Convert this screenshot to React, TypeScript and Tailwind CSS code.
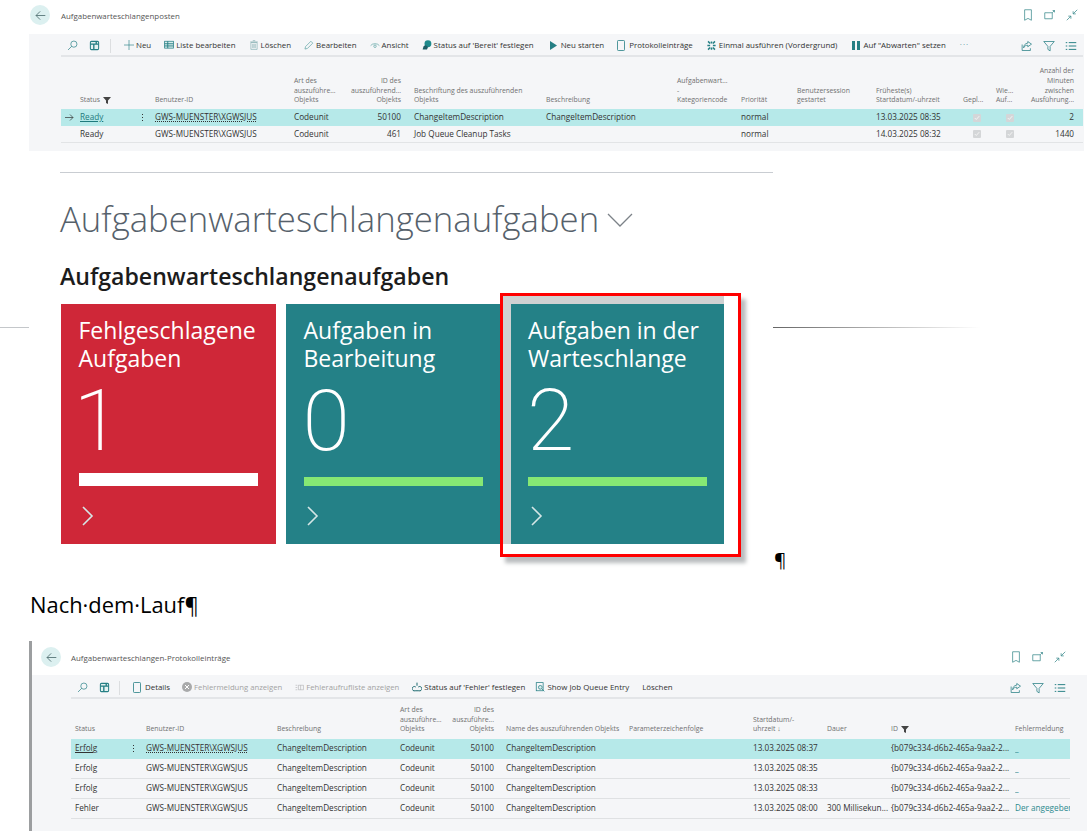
import React from "react";
const T = "#257f84";
const Ic = ({ children, w = 10, c = T, sw = 1 }: { children: React.ReactNode; w?: number; c?: string; sw?: number }) => (
  <svg width={w} height={w} viewBox="0 0 16 16" fill="none" stroke={c} strokeWidth={sw} className="shrink-0">{children}</svg>
);
const Search = () => <Ic w={11}><circle cx="10" cy="6" r="4.500" /><path d="M6.800 9.200 1.500 14.500" /></Ic>;
const Panel = () => <Ic w={11} sw={1.500}><rect x="2" y="2" width="12" height="12" rx="1.500" fill="#e4f2f1" /><path d="M2 6h12M7 6v8M10.500 2v4" strokeWidth="2" /></Ic>;
const Plus = () => <Ic><path d="M8 0v16M0 8h16" /></Ic>;
const Sq = () => <svg width="8" height="11" viewBox="0 0 8 11" fill="none" stroke={T} strokeWidth=".8" className="shrink-0 mr-[2px]"><rect x=".5" y=".5" width="7" height="10" rx=".8" /></svg>;
const Share = () => <Ic w={12}><path d="M9 2l5 3.500L9 9V7C6 7 4.500 8 3.500 10.500 3.500 7 5.500 4.500 9 4.200zM1.500 6v8h11v-3" /></Ic>;
const Filter = () => <Ic w={12}><path d="M1 2h14L9.500 8.500V14.500L6.500 12.500V8.500z" /></Ic>;
const Lines = () => <Ic w={12} sw={1.300}><path d="M1 3.500h2M5 3.500h10M1 8h2M5 8h10M1 12.500h2M5 12.500h10" /></Ic>;
const Book = () => <Ic w={12} c="#3a8a8c"><path d="M3.500 1h9v14L8 12.500 3.500 15z" /></Ic>;
const Pop = () => <Ic w={12} c="#3a8a8c"><path d="M1 5h10v8H1zM11 5l3-3M11.500 2H14v2.500" /></Ic>;
const Shrink = () => <Ic w={12} c="#3a8a8c"><path d="M15 1 9.500 6.500M9.500 3v3.500H13M1 15l5.500-5.500M6.500 13V9.500H3" /></Ic>;
const Back = () => (
  <div className="w-[20px] h-[20px] rounded-full bg-[#dcf0f0] flex items-center justify-center shrink-0">
    <svg width="11" height="11" viewBox="0 0 16 16" fill="none" stroke="#4a6a6c" strokeWidth="1.200"><path d="M15 8H1.500M7.500 2 1.500 8l6 6" /></svg>
  </div>
);
const Item = ({ icon, label, muted }: { icon?: React.ReactNode; label: string; muted?: boolean }) => (
  <div className={`flex items-center gap-[2px] whitespace-nowrap ${muted ? "text-[#a3a3a3] text-[7.700px]" : "text-[#333]"}`}>{icon}<span>{label}</span></div>
);
const Funnel = () => <svg width="8" height="7" viewBox="0 0 8 7" className="inline ml-[3px]"><path d="M0 0h8L5 3.500V7L3 6V3.500z" fill="#444" /></svg>;
const Dots = () => <span className="absolute right-[12px] top-0 bottom-0 flex flex-col justify-center gap-[1.500px]"><i className="w-[1.500px] h-[1.500px] bg-[#333]" /><i className="w-[1.500px] h-[1.500px] bg-[#333]" /><i className="w-[1.500px] h-[1.500px] bg-[#333]" /></span>;
const Check = () => <span className="w-[8px] h-[8px] bg-[#d4d6d8] rounded-[1px] flex items-center justify-center"><svg width="6" height="6" viewBox="0 0 8 8" fill="none" stroke="#f4f4f4" strokeWidth="1.300"><path d="M1 4l2 2 4-4.500" /></svg></span>;

const cols1 = "grid grid-cols-[19px_75px_139px_57px_63px_132px_131px_64px_56px_79px_87px_33px_30px_57px]";
const cols2 = "grid grid-cols-[4px_71px_131px_123px_52px_42px_135px_124px_74px_64px_124px_55px]";

const Head1 = () => (
  <div className={`${cols1} items-end h-[52px] pb-[4px] text-[#707070] leading-[9.700px] text-[6.900px]`}>
    <span />
    <span>Status<Funnel /></span>
    <span>Benutzer-ID</span>
    <span>Art des<br />auszuführe...<br />Objekts</span>
    <span className="text-right pr-[13px]">ID des<br />auszuführend...<br />Objekts</span>
    <span>Beschriftung des auszuführenden<br />Objekts</span>
    <span>Beschreibung</span>
    <span>Aufgabenwart...<br />-<br />Kategoriencode</span>
    <span>Priorität</span>
    <span>Benutzersession<br />gestartet</span>
    <span>Früheste(s)<br />Startdatum/-uhrzeit</span>
    <span>Gepl...</span>
    <span>Wie...<br />Auf...</span>
    <span className="text-right pr-[9px]">Anzahl der<br />Minuten<br />zwischen<br />Ausführung...</span>
  </div>
);
const Row1 = ({ sel, id, cap, desc, date, min }: { sel?: boolean; id: string; cap: string; desc: string; date: string; min: string }) => (
  <div className={`${cols1} items-center h-[17px] text-[8.200px] text-[#333] ${sel ? "bg-[#b6e9e9]" : "border-b border-[#e2e4e6]"}`}>
    <span className="pl-[4px]">{sel && <svg width="9" height="7" viewBox="0 0 9 7" fill="none" stroke="#333" strokeWidth=".7"><path d="M0 3.500h8M5 .5l3 3-3 3" /></svg>}</span>
    <span className={`relative h-full flex items-center ${sel ? "text-[#1f7a7d] underline" : ""}`}>Ready{sel && <Dots />}</span>
    <span className={sel ? "underline decoration-dotted" : ""}>GWS-MUENSTER\XGWSJUS</span>
    <span>Codeunit</span>
    <span className="text-right pr-[13px]">{id}</span>
    <span>{cap}</span>
    <span>{desc}</span>
    <span />
    <span>normal</span>
    <span />
    <span>{date}</span>
    <span className="pl-[10px]"><Check /></span>
    <span className="pl-[10px]"><Check /></span>
    <span className="text-right pr-[9px]">{min}</span>
  </div>
);
const Head2 = () => (
  <div className={`${cols2} items-end h-[40px] pb-[5px] text-[#707070] leading-[9.700px] text-[6.900px]`}>
    <span />
    <span>Status</span>
    <span>Benutzer-ID</span>
    <span>Beschreibung</span>
    <span>Art des<br />auszuführe...<br />Objekts</span>
    <span className="text-right">ID des<br />auszuführe...<br />Objekts</span>
    <span className="pl-[12px] whitespace-nowrap">Name des auszuführenden Objekts</span>
    <span>Parameterzeichenfolge</span>
    <span>Startdatum/-<br />uhrzeit ↓</span>
    <span>Dauer</span>
    <span>ID<Funnel /></span>
    <span>Fehlermeldung</span>
  </div>
);
const Row2 = ({ sel, st, date, dauer, err }: { sel?: boolean; st: string; date: string; dauer?: string; err: string }) => (
  <div className={`${cols2} items-center h-[20px] text-[8.200px] text-[#333] border-b ${sel ? "bg-[#b6e9e9] border-[#b6e9e9]" : "border-[#dfe1e3]"}`}>
    <span />
    <span className={`relative h-full flex items-center ${sel ? "underline" : ""}`}>{st}{sel && <Dots />}</span>
    <span className={sel ? "underline decoration-dotted" : ""}>GWS-MUENSTER\XGWSJUS</span>
    <span>ChangeItemDescription</span>
    <span>Codeunit</span>
    <span className="text-right">50100</span>
    <span className="pl-[12px]">ChangeItemDescription</span>
    <span />
    <span>{date}</span>
    <span className="whitespace-nowrap">{dauer}</span>
    <span className="whitespace-nowrap">{"{b079c334-d6b2-465a-9aa2-2..."}</span>
    <span className="whitespace-nowrap overflow-hidden text-[#2b8a8e]">{err}</span>
  </div>
);
const Tile = ({ a, b, n, red, narrow }: { a: string; b: string; n: string; red?: boolean; narrow?: boolean }) => (
  <div className={`${narrow ? "w-[213.500px]" : "w-[215px]"} h-[240px] pl-[17.500px] pt-[12px] flex flex-col text-white ${red ? "bg-[#cf2738]" : "bg-[#248187]"}`}>
    <div className="text-[23px] leading-[28px] whitespace-nowrap">{a}<br />{b}</div>
    <div className={`text-[86px] leading-[80px] pt-[9px] h-[101px] font-['Roboto'] font-extralight ${n === "1" ? "-ml-[5px]" : "-ml-[1px]"}`}>{n}</div>
    <div className="h-[13px] w-[179px] flex items-end">
      <div className={red ? "w-full h-[13px] bg-white" : "w-full h-[9px] bg-[#86e874]"} />
    </div>
    <svg width="13" height="20" viewBox="0 0 13 20" fill="none" stroke="#d5e6e6" strokeWidth="1.600" className="mt-[20px] ml-[2px]"><path d="M2 1l9 9-9 9" /></svg>
  </div>
);

export default function App() {
  return (
    <div className="w-[1089px] h-[831px] overflow-hidden bg-white font-['Open_Sans','Noto_Sans',sans-serif]">
      {/* First page */}
      <section className="ml-[29px] w-[1055px] h-[151px] flex flex-col">
        <div className="h-[34px] flex items-center pl-[1px] pr-[6px] pb-[4px]">
          <Back />
          <span className="ml-[11px] mt-[3px] text-[7.900px] text-[#555]">Aufgabenwarteschlangenposten</span>
          <div className="ml-auto flex gap-[10px]"><Book /><Pop /><Shrink /></div>
        </div>
        <div className="flex-1 bg-[#f5f6f8] pl-[32px] pr-[1px]">
          <div className="h-[23px] pt-[2px] flex items-center border-b-2 border-[#e3e5e8] pl-[6px] pr-[6px] gap-[13px] text-[7.900px]">
            <div className="flex items-center gap-[11px] pr-[10px] border-r border-[#dcdee0] h-[14px]"><Search /><Panel /></div>
            <Item icon={<Plus />} label="Neu" />
            <Item icon={<Ic sw={1.200}><rect x="1" y="2" width="14" height="11" fill="#d8eceb" /><path d="M1 6h14M1 9.500h14M6 2v11" strokeWidth="1.500" /></Ic>} label="Liste bearbeiten" />
            <Item icon={<Ic c="#7aa9ab"><path d="M3 4v11h10V4zM2 3h12M6 1h4M6 6v7M8 6v7M10 6v7" /></Ic>} label="Löschen" />
            <Item icon={<Ic c="#4d9a9a"><path d="M1.500 14.500l1-4L11 2l3 3-8.500 8.500z" /></Ic>} label="Bearbeiten" />
            <Item icon={<Ic c="#4d9a9a"><path d="M1 9a8 6 0 0 1 14 0" /><circle cx="8" cy="10" r="2" /></Ic>} label="Ansicht" />
            <Item icon={<Ic sw={0}><circle cx="9.500" cy="6" r="5.500" fill="#1f8a8c" /><path d="M1 15l1.500-5 2.500-1.500 3 1 1.500 2L8 15z" fill="#1d5e66" /></Ic>} label="Status auf 'Bereit' festlegen" />
            <div className="ml-[3px]"><Item icon={<svg width="7" height="9" viewBox="0 0 7 9" className="mr-[2px]"><path d="M0 0l7 4.500L0 9z" fill={T} /></svg>} label="Neu starten" /></div>
            <Item icon={<Sq />} label="Protokolleinträge" />
            <Item icon={<Ic w={11} sw={2.200}><path d="M3 2l3 3M13 2l-3 3M3 14l3-3M13 14l-3-3M2 8h4M10 8h4M8 2v3M8 11v3" /></Ic>} label="Einmal ausführen (Vordergrund)" />
            <div className="ml-[2px]"><Item icon={<svg width="8" height="9" viewBox="0 0 8 9" className="mr-[1px]"><path d="M0 0h3v9H0zM5 0h3v9H5z" fill={T} /></svg>} label="Auf &quot;Abwarten&quot; setzen" /></div>
            <span className="text-[#4d8f90] tracking-[1px] leading-none -mt-[2px] ml-[1px]">···</span>
            <div className="ml-auto flex gap-[10px]"><Share /><Filter /><Lines /></div>
          </div>
          <Head1 />
          <Row1 sel id="50100" cap="ChangeItemDescription" desc="ChangeItemDescription" date="13.03.2025 08:35" min="2" />
          <Row1 id="461" cap="Job Queue Cleanup Tasks" desc="" date="14.03.2025 08:32" min="1440" />
        </div>
      </section>

      {/* Document middle */}
      <section className="pl-[60px] pt-[21px]">
        <div className="w-[713px] h-px bg-[#c9cdd2]" />
        <div className="flex items-center h-[48px] mt-[22px] gap-[8px]">
          <h1 className="text-[34.700px] leading-[48px] font-light text-[#56616b] whitespace-nowrap">Aufgabenwarteschlangenaufgaben</h1>
          <svg width="26" height="14" viewBox="0 0 26 14" fill="none" stroke="#7c8288" strokeWidth="1.300" className="mt-[2px]"><path d="M1 1l12 12L25 1" /></svg>
        </div>
        <h2 className="mt-[19px] h-[28px] text-[23.100px] leading-[28px] font-semibold text-[#1c1c1c] whitespace-nowrap">Aufgabenwarteschlangenaufgaben</h2>
      </section>
      <section className="flex items-start mt-[14px]">
        <div className="w-[29px] h-px bg-[#c4c7ca] mt-[23px]" />
        <div className="ml-[32px] flex gap-[10px] w-[663px]">
          <Tile red a="Fehlgeschlagene" b="Aufgaben" n="1" />
          <Tile a="Aufgaben in" b="Bearbeitung" n="0" />
          <div className="relative -ml-[0.500px]">
            <div className="absolute -left-[10.500px] -top-[11px] -right-[17px] -bottom-[13px] border-[3px] border-[#ff0000] bg-white shadow-[5px_6px_4px_#b9bcbe]" />
            <div className="absolute -left-[7.500px] -top-[8px] right-0 bottom-0 bg-[#cfd1d2]" />
            <div className="relative"><Tile narrow a="Aufgaben in der" b="Warteschlange" n="2" /></div>
          </div>
        </div>
        <div className="ml-[49px] w-[207px] h-px mt-[23px] bg-gradient-to-r from-[#666] to-transparent" />
      </section>
      <div className="ml-[774px] h-[22px] mt-[5px] text-[19px] leading-[22px] text-black">¶</div>
      <div className="ml-[30px] mt-[17px] h-[34px] text-[21.900px] leading-[34px] text-black whitespace-nowrap">Nach·dem·Lauf¶</div>

      {/* Second page */}
      <section className="ml-[29px] mt-[19px] w-[1058px] h-[190px] border-l-[3px] border-[#9c9ea0] flex flex-col">
        <div className="h-[34px] flex items-center pl-[9px] pr-[21px] pb-[2px]">
          <Back />
          <span className="ml-[10px] mt-[3px] text-[7.900px] text-[#555]">Aufgabenwarteschlangen-Protokolleinträge</span>
          <div className="ml-auto flex gap-[10px]"><Book /><Pop /><Shrink /></div>
        </div>
        <div className="flex-1 bg-[#f5f6f8] pl-[39px] pr-[17px]">
          <div className="h-[24px] pt-[3px] flex items-center border-b-2 border-[#e3e5e8] pl-[6px] pr-[4px] gap-[13px] text-[7.900px]">
            <div className="flex items-center gap-[11px] pr-[9px] border-r border-[#dcdee0] h-[14px]"><Search /><Panel /></div>
            <Item icon={<Sq />} label="Details" />
            <div className="-ml-[1px]"><Item muted icon={<svg width="10" height="10" viewBox="0 0 10 10"><circle cx="5" cy="5" r="5" fill="#a9aaab" /><path d="M3 3l4 4M7 3L3 7" stroke="#fff" /></svg>} label="Fehlermeldung anzeigen" /></div>
            <Item muted icon={<Ic w={9} c="#a9aaab"><path d="M1 4h3M1 8h3M1 12h3M6 4h9v8H6zM10 4v8" /></Ic>} label="Fehleraufrufliste anzeigen" />
            <Item icon={<Ic c="#1d6a70" sw={1.600}><path d="M8 1v5M5 14a3.500 3.500 0 1 1 1-6M11 14a3.500 3.500 0 1 0-1-6M5 14h6" /></Ic>} label="Status auf 'Fehler' festlegen" />
            <div className="-ml-[3px]"><Item icon={<Ic sw={1.200}><rect x="2" y="1" width="11" height="13" /><circle cx="8.500" cy="8.500" r="3" fill="#d8eceb" /><path d="M11 11l4 4" /></Ic>} label="Show Job Queue Entry" /></div>
            <Item label="Löschen" />
            <div className="ml-auto flex gap-[10px]"><Share /><Filter /><Lines /></div>
          </div>
          <Head2 />
          <Row2 sel st="Erfolg" date="13.03.2025 08:37" err="_" />
          <Row2 st="Erfolg" date="13.03.2025 08:35" err="_" />
          <Row2 st="Erfolg" date="13.03.2025 08:33" err="_" />
          <Row2 st="Fehler" date="13.03.2025 08:00" dauer="300 Millisekun..." err="Der angegeben" />
        </div>
      </section>
    </div>
  );
}
